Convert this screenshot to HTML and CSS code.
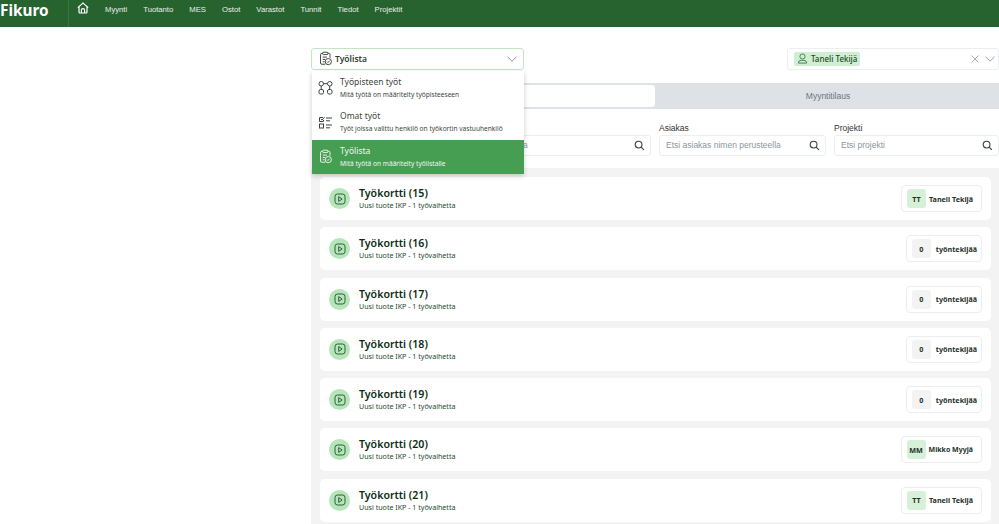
FILE: index.html
```html
<!DOCTYPE html>
<html lang="fi">
<head>
<meta charset="utf-8">
<title>Fikuro</title>
<link rel="stylesheet" href="styles.css">
</head>
<body>
<svg class="defs" width="0" height="0" aria-hidden="true">
  <symbol id="i-list" viewBox="0 0 16 16" fill="none" stroke="currentColor" stroke-width="1">
    <path d="M10.5 2.500h1a1.300 1.300 0 0 1 1.300 1.300v3.400M5 2.500H4A1.300 1.300 0 0 0 2.700 3.800v9A1.300 1.300 0 0 0 4 14.100h3.800"/>
    <rect x="5" y="1.300" width="5.500" height="2.500" rx=".8"/>
    <path d="M5 6.500h4.500M5 9h2.500M5 11.500h2"/>
    <circle cx="11" cy="11.300" r="3.300"/>
    <path d="M9.600 11.300l1 1 1.800-1.900"/>
  </symbol>
  <symbol id="i-search" viewBox="0 0 12 12" fill="none" stroke="currentColor" stroke-width="1.200">
    <circle cx="5" cy="5" r="3.700"/><path d="M7.800 7.800l3 3"/>
  </symbol>
  <symbol id="i-chev" viewBox="0 0 12 12" fill="none" stroke="currentColor" stroke-width="1">
    <path d="M1.500 3.800L6 8.200l4.500-4.400"/>
  </symbol>
  <symbol id="i-play" viewBox="0 0 12 12" fill="none" stroke="currentColor" stroke-width="1">
    <rect x="1" y="1" width="10" height="10" rx="2.500"/><path d="M4.700 3.600l3.400 2.400-3.400 2.400z"/>
  </symbol>
</svg>

<header class="topbar">
  <div class="logo">Fikuro</div>
  <nav class="nav">
    <a class="home" href="#" aria-label="Koti">
      <svg width="12" height="12" viewBox="0 0 12 12" fill="none" stroke="currentColor" stroke-width="1.200"><path d="M.8 5.600L6 1l5.200 4.600M2 4.800v5.200a1 1 0 0 0 1 1h6a1 1 0 0 0 1-1V4.800"/><path d="M4.400 11V8.300a1.600 1.600 0 0 1 3.200 0V11"/></svg>
    </a>
    <a href="#">Myynti</a>
    <a href="#">Tuotanto</a>
    <a href="#">MES</a>
    <a href="#">Ostot</a>
    <a href="#">Varastot</a>
    <a href="#">Tunnit</a>
    <a href="#">Tiedot</a>
    <a href="#">Projektit</a>
  </nav>
</header>

<main class="page">
  <div class="selectors">
    <div class="select">
      <svg class="select-icon" width="15" height="15"><use href="#i-list"/></svg>
      <span class="select-text">Työlista</span>
      <svg class="chev" width="12" height="12"><use href="#i-chev"/></svg>
    </div>
    <div class="assignee">
      <span class="tag">
        <svg width="11" height="11" viewBox="0 0 12 12" fill="none" stroke="currentColor" stroke-width="1"><circle cx="6" cy="3.800" r="2.800"/><path d="M1.500 11h9a3 3 0 0 0-3-3h-3a3 3 0 0 0-3 3z"/></svg>
        Taneli Tekijä
      </span>
      <span class="assignee-actions">
        <svg width="10" height="10" viewBox="0 0 10 10" stroke="currentColor" stroke-width=".9"><path d="M1.500 1.500l7 7M8.500 1.500l-7 7"/></svg>
        <svg width="12" height="12"><use href="#i-chev"/></svg>
      </span>
    </div>
  </div>

  <div class="tabs">
    <div class="tab tab-active">Työkortti</div>
    <div class="tab">Myyntitilaus</div>
  </div>

  <div class="filters">
    <label class="filter">
      <span class="filter-label">Haku</span>
      <span class="input"><span>Etsi työkortti nimen, tuotteen tai työntekijä perusteella</span><svg width="11" height="11"><use href="#i-search"/></svg></span>
    </label>
    <label class="filter filter-customer">
      <span class="filter-label">Asiakas</span>
      <span class="input"><span>Etsi asiakas nimen perusteella</span><svg width="11" height="11"><use href="#i-search"/></svg></span>
    </label>
    <label class="filter filter-project">
      <span class="filter-label">Projekti</span>
      <span class="input"><span>Etsi projekti</span><svg width="11" height="11"><use href="#i-search"/></svg></span>
    </label>
  </div>

  <section class="cards">
    <article class="card">
      <span class="play"><svg width="12" height="12"><use href="#i-play"/></svg></span>
      <div class="card-text"><h3>Työkortti (15)</h3><p>Uusi tuote IKP - 1 työvaihetta</p></div>
      <div class="person"><span class="badge badge-green">TT</span><span>Taneli Tekijä</span></div>
    </article>
    <article class="card">
      <span class="play"><svg width="12" height="12"><use href="#i-play"/></svg></span>
      <div class="card-text"><h3>Työkortti (16)</h3><p>Uusi tuote IKP - 1 työvaihetta</p></div>
      <div class="person person-empty"><span class="badge">0</span><span>työntekijää</span></div>
    </article>
    <article class="card">
      <span class="play"><svg width="12" height="12"><use href="#i-play"/></svg></span>
      <div class="card-text"><h3>Työkortti (17)</h3><p>Uusi tuote IKP - 1 työvaihetta</p></div>
      <div class="person person-empty"><span class="badge">0</span><span>työntekijää</span></div>
    </article>
    <article class="card">
      <span class="play"><svg width="12" height="12"><use href="#i-play"/></svg></span>
      <div class="card-text"><h3>Työkortti (18)</h3><p>Uusi tuote IKP - 1 työvaihetta</p></div>
      <div class="person person-empty"><span class="badge">0</span><span>työntekijää</span></div>
    </article>
    <article class="card">
      <span class="play"><svg width="12" height="12"><use href="#i-play"/></svg></span>
      <div class="card-text"><h3>Työkortti (19)</h3><p>Uusi tuote IKP - 1 työvaihetta</p></div>
      <div class="person person-empty"><span class="badge">0</span><span>työntekijää</span></div>
    </article>
    <article class="card">
      <span class="play"><svg width="12" height="12"><use href="#i-play"/></svg></span>
      <div class="card-text"><h3>Työkortti (20)</h3><p>Uusi tuote IKP - 1 työvaihetta</p></div>
      <div class="person"><span class="badge badge-green">MM</span><span class="person-tight">Mikko Myyjä</span></div>
    </article>
    <article class="card">
      <span class="play"><svg width="12" height="12"><use href="#i-play"/></svg></span>
      <div class="card-text"><h3>Työkortti (21)</h3><p>Uusi tuote IKP - 1 työvaihetta</p></div>
      <div class="person"><span class="badge badge-green">TT</span><span>Taneli Tekijä</span></div>
    </article>
  </section>

  <div class="menu">
    <div class="menu-item">
      <svg class="menu-icon" width="15" height="15" viewBox="0 0 15 15" fill="none" stroke="currentColor" stroke-width="1"><rect x="1" y="1.500" width="4.500" height="4.500" rx="2.200"/><rect x="9.500" y="1.500" width="4.500" height="4.500" rx="2.200"/><rect x="1" y="9.500" width="4.500" height="4.500" rx="1.500"/><rect x="9.500" y="9.500" width="4.500" height="4.500" rx="1.500"/><path d="M5.500 3.700h4M3.200 6v3.500M11.700 6v3.500"/></svg>
      <div><div class="menu-title">Työpisteen työt</div><div class="menu-sub">Mitä työtä on määritelty työpisteeseen</div></div>
    </div>
    <div class="menu-item">
      <svg class="menu-icon" width="15" height="15" viewBox="0 0 15 15" fill="none" stroke="currentColor" stroke-width="1"><path d="M1.500 2.500h3.500M1.500 2.500v4h4V5"/><path d="M2.800 4l1.200 1.100 2.500-2.800"/><rect x="1.500" y="9" width="4" height="4"/><path d="M8 3h6M8 5.800h4M8 10h6M8 12.800h4"/></svg>
      <div><div class="menu-title">Omat työt</div><div class="menu-sub">Työt joissa valittu henkilö on työkortin vastuuhenkilö</div></div>
    </div>
    <div class="menu-item menu-item-active">
      <svg class="menu-icon" width="15" height="15"><use href="#i-list"/></svg>
      <div><div class="menu-title">Työlista</div><div class="menu-sub">Mitä työtä on määritelty työlistalle</div></div>
    </div>
  </div>
</main>
</body>
</html>
```
FILE: styles.css
```css
* { box-sizing: border-box; }
html, body { margin: 0; height: 100%; }
body {
  background: #fff;
  color: #12301a;
  font-family: "Noto Sans", sans-serif;
  overflow: hidden;
}
.defs { position: absolute; }

.topbar {
  display: flex;
  height: 26.500px;
  background: #27632f;
  color: #fff;
}
.logo {
  width: 69px;
  padding-top: 1px;
  border-right: 1px solid #3a7442;
  font: 700 15.300px/19px "Noto Sans", sans-serif;
}
.nav {
  display: flex;
  gap: 16px;
  padding-left: 8px;
  font: 7.700px/20px "Liberation Sans", sans-serif;
}
.nav a { color: #e8efe9; text-decoration: none; }
.nav .home { display: flex; height: 15px; padding-top: 2px; color: #fff; }

.page {
  position: relative;
  margin-left: 311px;
  width: 688px;
}

.selectors {
  display: flex;
  justify-content: space-between;
  padding-top: 21px;
}
.select {
  display: flex;
  align-items: center;
  width: 213px;
  height: 22px;
  padding: 0 5px 0 6px;
  border: 1px solid #c4e6c6;
  border-radius: 3px;
  color: #333b35;
}
.select-text { flex: 1; margin-left: 2px; font-size: 8.500px; font-weight: 600; }
.chev { color: #8f979b; }
.assignee {
  display: flex;
  align-items: center;
  justify-content: space-between;
  width: 212px;
  height: 22px;
  padding: 0 2px 0 6px;
  border: 1px solid #eceeef;
  border-radius: 3px;
}
.tag {
  display: flex;
  align-items: center;
  gap: 3px;
  height: 14px;
  padding: 0 3px;
  background: #d1eed2;
  border-radius: 2px;
  color: #1e4a27;
  font-size: 8px;
  font-weight: 500;
}
.tag svg { color: #3d7d48; }
.assignee-actions { display: flex; align-items: center; gap: 4px; color: #9aa1a5; }

.tabs {
  display: flex;
  gap: 2px;
  height: 26.500px;
  margin: 13px 0 0 9px;
  padding: 2.500px 0 2px 2px;
  background: #dee2e6;
  border-radius: 4px 0 0 4px;
  font: 8.500px/22px "Liberation Sans", sans-serif;
  color: #6c757d;
  text-align: center;
}
.tab { flex: 1; border-radius: 3px; }
.tab-active { flex: 0 0 333px; background: #fff; color: #333; }

.filters {
  display: flex;
  gap: 8px;
  height: 59px;
  margin-left: 9px;
  padding-top: 13px;
  font-family: "Liberation Sans", sans-serif;
}
.filter { display: flex; flex-direction: column; width: 331px; }
.filter-customer { width: 167px; }
.filter-project { width: 165px; }
.filter-label { font-size: 8.500px; line-height: 12.500px; color: #333; }
.input {
  display: flex;
  align-items: center;
  justify-content: space-between;
  height: 21px;
  padding: 0 5px 0 6px;
  border: 1px solid #eceeef;
  border-radius: 3px;
  background: #fff;
  color: #8d959b;
  font-size: 8.500px;
}
.input svg { color: #38424a; }

.cards {
  display: flex;
  flex-direction: column;
  gap: 7.300px;
  height: 356px;
  padding: 9px 8px 0 9px;
  background: #f3f3f3;
}
.card {
  display: flex;
  flex: none;
  align-items: center;
  height: 43px;
  padding: 0 9px;
  background: #fff;
  border-radius: 5px;
}
.play {
  display: flex;
  align-items: center;
  justify-content: center;
  width: 21px;
  height: 21px;
  border-radius: 50%;
  background: #b6e5b9;
  color: #2c5f38;
}
.card-text { flex: 1; margin-left: 9px; }
.card-text h3 {
  margin: 0;
  font-size: 10.600px;
  font-weight: 600;
  line-height: 13px;
  color: #0b2a12;
}
.card-text p {
  margin: 0;
  font-size: 7.100px;
  line-height: 10px;
  color: #24492e;
}
.person {
  display: flex;
  align-items: center;
  gap: 3px;
  height: 27px;
  padding: 0 8px 0 5px;
  border: 1px solid #eceeef;
  border-radius: 4px;
  font-size: 7.200px;
  font-weight: 700;
  color: #23302a;
}
.person-tight { font-size: 7px; }
.person-empty { gap: 5px; padding-right: 4px; }
.badge {
  display: flex;
  align-items: center;
  justify-content: center;
  width: 19px;
  height: 19px;
  border-radius: 3px;
  background: #f3f3f3;
}
.badge-green { background: #d7f0d8; }

.menu {
  position: absolute;
  top: 44px;
  left: 1px;
  width: 212px;
  background: #fff;
  box-shadow: 0 2px 5px rgba(0, 0, 0, .2);
  color: #3b4640;
}
.menu-item {
  display: flex;
  align-items: center;
  gap: 7px;
  height: 34.500px;
  padding: 0 6px;
}
.menu-item-active { background: #469e53; color: #f0f7f0; }
.menu-icon { flex: none; }
.menu-title { font-size: 8.500px; line-height: 13px; }
.menu-sub { font-size: 6.600px; line-height: 13px; }
```
